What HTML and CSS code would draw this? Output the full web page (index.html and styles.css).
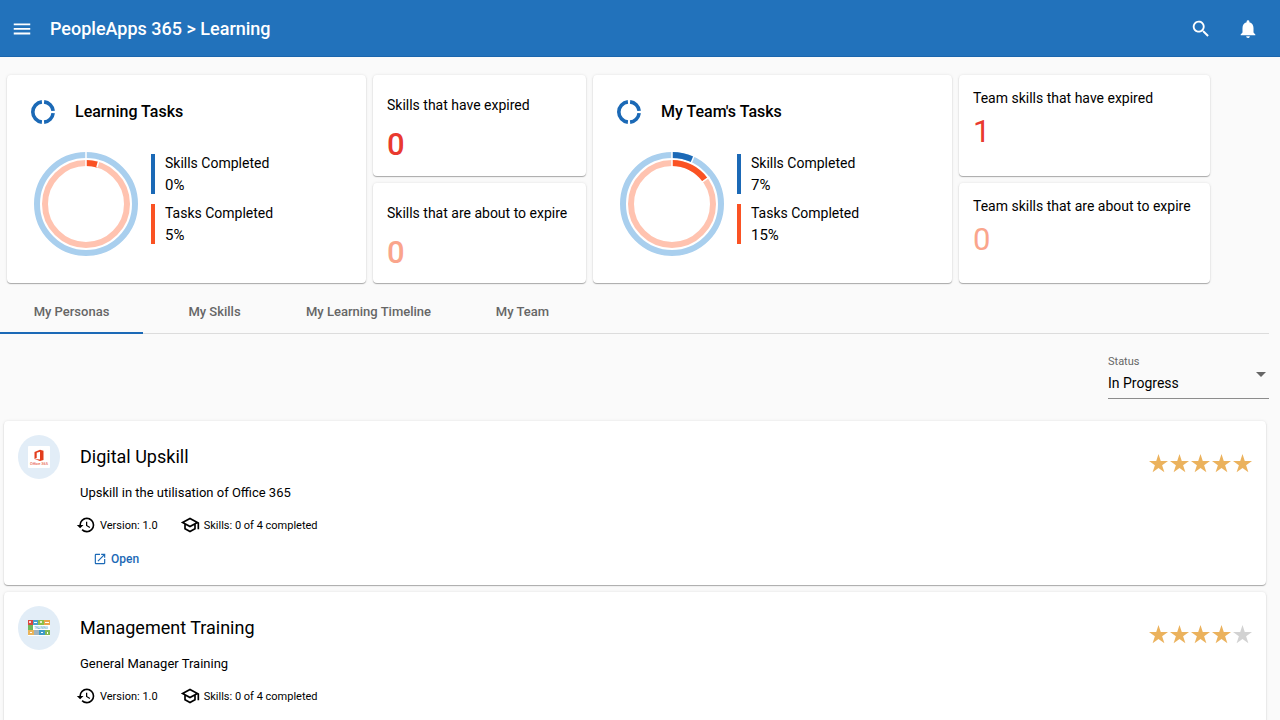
FILE: index.html
```html
<!DOCTYPE html>
<html lang="en">
<head>
    <meta charset="UTF-8">
    <meta name="viewport" content="width=device-width, initial-scale=1.0">
    <title>PeopleApps 365 - Learning</title>
    <link rel="stylesheet" href="styles.css">
</head>
<body>
    <!-- shared icons -->
    <svg class="icon-defs" aria-hidden="true">
        <symbol id="icon-ring" viewBox="0 0 24 24">
            <path fill="none" stroke="currentColor" stroke-width="3.600" d="M10.900 1.860A10.200 10.200 0 0 0 10.900 22.140M13.100 1.860A10.200 10.200 0 0 1 22.140 10.900M22.140 13.100A10.200 10.200 0 0 1 13.100 22.140"/>
        </symbol>
        <symbol id="icon-history" viewBox="0 0 24 24">
            <path fill="currentColor" d="M13 3a9 9 0 0 0-9 9H1l3.890 3.890.070.140L9 12H6c0-3.870 3.130-7 7-7s7 3.130 7 7-3.130 7-7 7c-1.930 0-3.680-.790-4.940-2.060l-1.420 1.420A8.950 8.950 0 0 0 13 21a9 9 0 0 0 0-18zm-1 5v5l4.280 2.540.720-1.210-3.500-2.080V8H12z"/>
        </symbol>
        <symbol id="icon-school" viewBox="0 0 24 24">
            <path fill="currentColor" d="M12 3L1 9l4 2.180v6L12 21l7-3.820v-6l2-1.090V17h2V9L12 3zm6.820 6L12 12.720 5.180 9 12 5.280 18.820 9zM17 15.990l-5 2.730-5-2.730v-3.720L12 15l5-2.730v3.720z"/>
        </symbol>
        <symbol id="icon-open" viewBox="0 0 24 24">
            <path fill="currentColor" d="M19 19H5V5h7V3H5a2 2 0 0 0-2 2v14a2 2 0 0 0 2 2h14c1.100 0 2-.900 2-2v-7h-2v7zM14 3v2h3.590l-9.830 9.830 1.410 1.410L19 6.410V10h2V3h-7z"/>
        </symbol>
        <symbol id="icon-star" viewBox="0 0 20 20">
            <path fill="currentColor" d="M10 0l2.400 7.400H20l-6.200 4.500 2.400 7.400-6.200-4.600-6.200 4.600 2.400-7.400L0 7.400h7.600z"/>
        </symbol>
    </svg>

    <header class="app-bar">
        <button type="button" class="icon-button" aria-label="Menu">
            <svg width="22" height="22" viewBox="0 0 24 24"><path fill="currentColor" d="M3 19h18v-2H3v2zm0-5h18v-2H3v2zm0-7v2h18V7H3z"/></svg>
        </button>
        <h1 class="app-title">PeopleApps 365 &gt; Learning</h1>
        <button type="button" class="icon-button" aria-label="Search">
            <svg width="22" height="22" viewBox="0 0 24 24"><path fill="currentColor" transform="translate(0 1)" d="M15.500 14h-.790l-.280-.270A6.500 6.500 0 1 0 13.730 14.430l.270.280v.790l5 4.990L20.490 19l-4.990-5zm-6 0a4.500 4.500 0 1 1 0-9 4.500 4.500 0 0 1 0 9z"/></svg>
        </button>
        <button type="button" class="icon-button" aria-label="Notifications">
            <svg width="22" height="22" viewBox="0 0 24 24"><path fill="currentColor" transform="translate(0 1)" d="M12 22c1.100 0 2-.900 2-2h-4a2 2 0 0 0 2 2zm6-6v-5c0-3.070-1.640-5.640-4.500-6.320V4a1.500 1.500 0 0 0-3 0v.680C7.630 5.360 6 7.920 6 11v5l-2 2v1h16v-1l-2-2z"/></svg>
        </button>
    </header>

    <main>
        <section class="summary">
            <article class="card chart-card">
                <h2 class="chart-title"><svg class="ring-icon"><use href="#icon-ring"/></svg>Learning Tasks</h2>
                <div class="chart-body">
                    <svg class="donut" viewBox="0 0 104 104" role="img" aria-label="Skills 0%, tasks 5%">
                        <g fill="none" stroke-width="6" transform="rotate(-90 52 52)">
                            <circle cx="52" cy="52" r="49" stroke="#a9cfee"/>
                            <circle cx="52" cy="52" r="41" stroke="#ffc3b0"/>
                            <circle cx="52" cy="52" r="41" stroke="#fa5223" pathLength="100" stroke-dasharray="4.500 95.500"/>
                        </g>
                        <path stroke="#fff" stroke-width="1.500" d="M52 0v15M63 15l2-7"/>
                    </svg>
                    <dl class="legend">
                        <div class="legend-item skills"><dt>Skills Completed</dt><dd>0%</dd></div>
                        <div class="legend-item tasks"><dt>Tasks Completed</dt><dd>5%</dd></div>
                    </dl>
                </div>
            </article>

            <div class="counts">
                <article class="card count-card">
                    <h3>Skills that have expired</h3>
                    <p class="count bold expired">0</p>
                </article>
                <article class="card count-card">
                    <h3>Skills that are about to expire</h3>
                    <p class="count bold expiring">0</p>
                </article>
            </div>

            <article class="card chart-card">
                <h2 class="chart-title"><svg class="ring-icon"><use href="#icon-ring"/></svg>My Team's Tasks</h2>
                <div class="chart-body">
                    <svg class="donut" viewBox="0 0 104 104" role="img" aria-label="Skills 7%, tasks 15%">
                        <g fill="none" stroke-width="6" transform="rotate(-90 52 52)">
                            <circle cx="52" cy="52" r="49" stroke="#a9cfee"/>
                            <circle cx="52" cy="52" r="49" stroke="#1b69b6" pathLength="100" stroke-dasharray="7 93"/>
                            <circle cx="52" cy="52" r="41" stroke="#ffc3b0"/>
                            <circle cx="52" cy="52" r="41" stroke="#fa5223" pathLength="100" stroke-dasharray="15 85"/>
                        </g>
                        <path stroke="#fff" stroke-width="1.500" d="M52 0v15M70.700 12l4-9.500M82 30.200l7.500-5.400"/>
                    </svg>
                    <dl class="legend">
                        <div class="legend-item skills"><dt>Skills Completed</dt><dd>7%</dd></div>
                        <div class="legend-item tasks"><dt>Tasks Completed</dt><dd>15%</dd></div>
                    </dl>
                </div>
            </article>

            <div class="counts team">
                <article class="card count-card">
                    <h3>Team skills that have expired</h3>
                    <p class="count expired">1</p>
                </article>
                <article class="card count-card">
                    <h3>Team skills that are about to expire</h3>
                    <p class="count expiring">0</p>
                </article>
            </div>
        </section>

        <div class="tabs" role="tablist">
            <button type="button" class="tab active" role="tab" aria-selected="true">My Personas</button>
            <button type="button" class="tab" role="tab" aria-selected="false">My Skills</button>
            <button type="button" class="tab" role="tab" aria-selected="false">My Learning Timeline</button>
            <button type="button" class="tab" role="tab" aria-selected="false">My Team</button>
        </div>

        <div class="filter">
            <div class="field">
                <label for="status">Status</label>
                <select id="status" name="status">
                    <option>In Progress</option>
                    <option>Completed</option>
                </select>
            </div>
        </div>

        <section class="personas">
            <article class="card persona">
                <div class="avatar">
                    <svg width="22" height="22" viewBox="0 0 22 22" aria-hidden="true">
                        <rect width="22" height="22" rx="1" fill="#fff"/>
                        <path fill="#e23c1c" fill-rule="evenodd" d="M6.500 6l5.500-2.300 3.500 1v9.200l-3.500 1-5.500-2 5.500.700V5.800L8.700 6.700v5.200l-2.200 1z"/>
                        <text x="11" y="19" text-anchor="middle" class="logo-text">Office 365</text>
                    </svg>
                </div>
                <div class="persona-info">
                    <h2>Digital Upskill</h2>
                    <p class="description">Upskill in the utilisation of Office 365</p>
                    <div class="meta">
                        <span class="meta-item"><svg class="meta-icon"><use href="#icon-history"/></svg>Version: 1.0</span>
                        <span class="meta-item"><svg class="meta-icon"><use href="#icon-school"/></svg>Skills: 0 of 4 completed</span>
                    </div>
                    <a class="open-link" href="#digital-upskill"><svg class="open-icon"><use href="#icon-open"/></svg>Open</a>
                </div>
                <div class="rating" role="img" aria-label="5 out of 5 stars">
                    <svg class="star"><use href="#icon-star"/></svg>
                    <svg class="star"><use href="#icon-star"/></svg>
                    <svg class="star"><use href="#icon-star"/></svg>
                    <svg class="star"><use href="#icon-star"/></svg>
                    <svg class="star"><use href="#icon-star"/></svg>
                </div>
            </article>

            <article class="card persona">
                <div class="avatar">
                    <svg width="22" height="16" viewBox="0 0 22 16" aria-hidden="true">
                        <rect width="22" height="16" fill="#fff"/>
                        <path fill="#d9473f" d="M0 0h5v5H0z"/>
                        <path fill="#4a9fd0" d="M5 0h5v5H5z"/>
                        <path fill="#8bbf4b" d="M10 0h6v5h-6z"/>
                        <path fill="#e9a54b" d="M16 0h6v5h-6z"/>
                        <path fill="#6fb85a" d="M0 5h5v5H0z"/>
                        <path fill="#e9b45a" d="M0 10h6v5H0z"/>
                        <path fill="#9fb3bf" d="M6 10h5v5H6z"/>
                        <path fill="#3f9bc8" d="M11 10h6v5h-6z"/>
                        <path fill="#82b955" d="M17 10h5v5h-5z"/>
                        <g fill="#fff"><circle cx="2" cy="2" r="1"/><circle cx="13" cy="2" r="1"/><path d="M6 2h3v1H6zM17 2h4v1h-4zM2 12h2v1H2zM13 12h2v1h-2zM19 12h1v2h-1z"/></g>
                        <text x="13" y="9" text-anchor="middle" class="logo-text training">TRAINING</text>
                    </svg>
                </div>
                <div class="persona-info">
                    <h2>Management Training</h2>
                    <p class="description">General Manager Training</p>
                    <div class="meta">
                        <span class="meta-item"><svg class="meta-icon"><use href="#icon-history"/></svg>Version: 1.0</span>
                        <span class="meta-item"><svg class="meta-icon"><use href="#icon-school"/></svg>Skills: 0 of 4 completed</span>
                    </div>
                    <a class="open-link" href="#management-training"><svg class="open-icon"><use href="#icon-open"/></svg>Open</a>
                </div>
                <div class="rating" role="img" aria-label="4 out of 5 stars">
                    <svg class="star"><use href="#icon-star"/></svg>
                    <svg class="star"><use href="#icon-star"/></svg>
                    <svg class="star"><use href="#icon-star"/></svg>
                    <svg class="star"><use href="#icon-star"/></svg>
                    <svg class="star off"><use href="#icon-star"/></svg>
                </div>
            </article>
        </section>
    </main>
</body>
</html>
```
FILE: styles.css
```css
* {
    box-sizing: border-box;
}
body {
    margin: 0;
    background-color: #fafafa;
    color: #000;
    font-family: Roboto, Arial, sans-serif;
    font-size: 14px;
}
h1, h2, h3, p, dl, dd {
    margin: 0;
}
svg {
    display: block;
    flex: none;
}
button {
    font-family: inherit;
    border: none;
    background: none;
    cursor: pointer;
}
.icon-defs {
    display: none;
}

/* App bar */
.app-bar {
    display: flex;
    align-items: center;
    height: 57px;
    padding: 0 11px;
    background-color: #2272bb;
    border-bottom: 1px solid #1b66ad;
    color: #fff;
}
.icon-button {
    padding: 0;
    color: inherit;
}
.icon-button + .icon-button {
    margin-left: 25px;
}
.icon-button:last-child {
    margin-right: 10px;
}
.app-title {
    flex: 1;
    margin-left: 17px;
    font-size: 18px;
    font-weight: 500;
}

/* Cards */
.card {
    background-color: #fff;
    border-radius: 4px;
    box-shadow: 0 1px 1px rgba(0, 0, 0, 0.3), 0 0 3px rgba(0, 0, 0, 0.1);
}
.summary {
    display: flex;
    gap: 7px;
    padding: 18px 7px 7px;
}
.chart-card {
    flex: 0 1 359px;
    min-height: 208px;
    padding: 24px 27px 0 24px;
}
.chart-title {
    display: flex;
    align-items: center;
    gap: 20px;
    height: 25px;
    font-size: 16px;
    font-weight: 500;
}
.ring-icon {
    width: 24px;
    height: 24px;
    color: #1b69b6;
}
.chart-body {
    display: flex;
    gap: 13px;
    padding: 28px 0 0 3px;
}
.donut {
    width: 104px;
    height: 104px;
}
.legend {
    display: flex;
    flex-direction: column;
    gap: 10px;
    padding-top: 2px;
}
.legend-item {
    display: flex;
    flex-direction: column;
    justify-content: center;
    height: 40px;
    padding-left: 10px;
    border-left: 4px solid #1b69b6;
    line-height: 22px;
    white-space: nowrap;
}
.legend dd {
    font-size: 15px;
}
.legend-item.tasks {
    border-color: #fa5223;
}
.counts {
    display: flex;
    flex: 0 0 213px;
    flex-direction: column;
    gap: 7px;
}
.counts.team {
    flex-basis: 251px;
}
.count-card {
    flex: 1;
    padding: 20px 14px 0;
    white-space: nowrap;
}
.count-card h3 {
    font-size: 14px;
    font-weight: 400;
    line-height: 20px;
}
.count {
    padding-top: 12px;
    font-size: 31px;
    line-height: 36px;
}
.team .count-card {
    padding-top: 13px;
}
.team .count {
    padding-top: 6px;
}
.bold {
    font-weight: 500;
}
.expired {
    color: #e93a2f;
}
.expiring {
    color: #faa58c;
}

/* Tabs */
.tabs {
    display: flex;
    margin-right: 11px;
    border-bottom: 1px solid #dcdcdc;
}
.tab {
    min-width: 143px;
    height: 44px;
    margin-bottom: -1px;
    padding: 0 20px;
    border-bottom: 2px solid transparent;
    color: #666;
    font-size: 13px;
    font-weight: 500;
}
.tab.active {
    border-bottom-color: #1b69b6;
}

/* Status filter */
.filter {
    display: flex;
    justify-content: flex-end;
    padding: 20px 11px 22px;
}
.field {
    position: relative;
    width: 161px;
}
.field label {
    display: block;
    color: #666;
    font-size: 11px;
    line-height: 16px;
}
.field select {
    width: 100%;
    height: 29px;
    padding: 0 24px 2px 0;
    border: none;
    border-bottom: 1px solid #8c8c8c;
    border-radius: 0;
    appearance: none;
    background: none;
    color: #000;
    font-family: inherit;
    font-size: 14px;
}
/* drop-down arrow */
.field::after {
    content: "";
    position: absolute;
    top: 18px;
    right: 3px;
    border: 5px solid transparent;
    border-top-color: #666;
    border-bottom: none;
    pointer-events: none;
}

/* Personas */
.personas {
    display: flex;
    flex-direction: column;
    gap: 7px;
    padding: 0 14px 7px 4px;
}
.persona {
    display: flex;
    align-items: flex-start;
    min-height: 164px;
    padding: 14px;
}
.avatar {
    display: flex;
    align-items: center;
    justify-content: center;
    width: 42px;
    height: 44px;
    border-radius: 50%;
    background-color: #e2edf7;
}
.logo-text {
    fill: #e23c1c;
    font-size: 4px;
}
.logo-text.training {
    fill: #3f9bc8;
    font-size: 3px;
}
.persona-info {
    flex: 1;
    padding: 10px 0 0 20px;
}
.persona-info h2 {
    font-size: 18px;
    font-weight: 400;
    line-height: 24px;
}
.description {
    padding-top: 14px;
    font-size: 13px;
    line-height: 20px;
}
.meta {
    display: flex;
    gap: 22px;
    margin: 12px 0 0 -4px;
    font-size: 11px;
}
.meta-item {
    display: flex;
    align-items: center;
    gap: 4px;
}
.meta-icon {
    width: 20px;
    height: 20px;
}
.open-link {
    display: inline-flex;
    align-items: center;
    gap: 4px;
    margin: 16px 0 0 13px;
    color: #1b69b6;
    font-size: 12px;
    font-weight: 500;
    line-height: 16px;
    text-decoration: none;
}
.open-icon {
    width: 14px;
    height: 14px;
}
.rating {
    display: flex;
    gap: 2px;
    padding-top: 19px;
}
.star {
    width: 19px;
    height: 19px;
    color: #ebb25d;
}
.star.off {
    color: #d2d2d2;
}
```
